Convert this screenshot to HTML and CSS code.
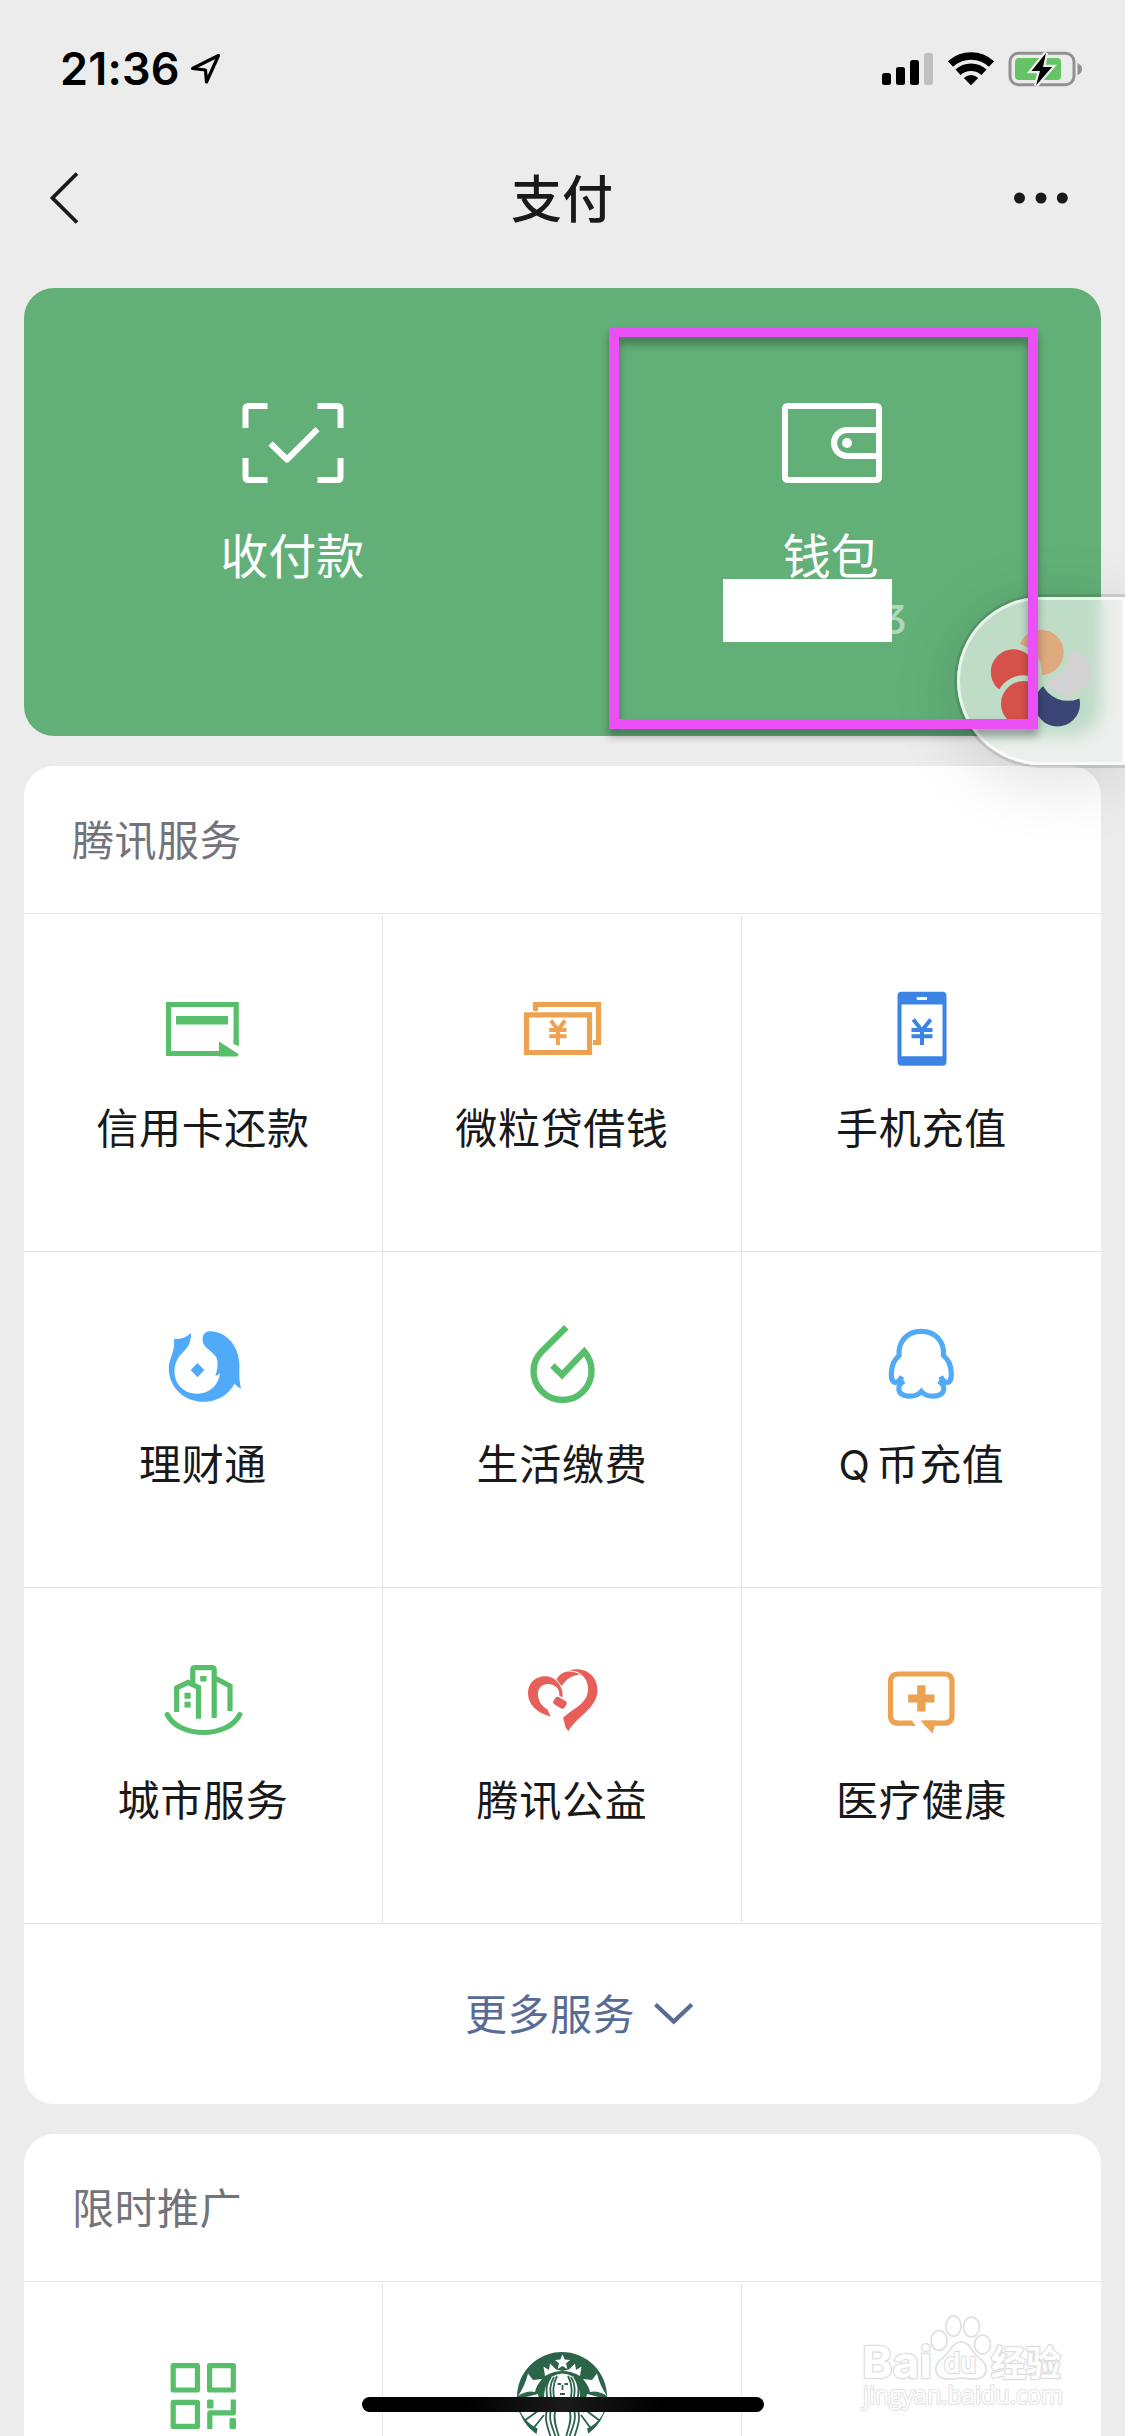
FILE: index.html
```html
<!DOCTYPE html>
<html lang="zh-CN">
<head>
<meta charset="utf-8">
<title>支付</title>
<link rel="stylesheet" href="styles.css">
</head>
<body>
<div class="screen">
  <header class="status">
    <span class="time">21:36</span>
    <svg class="locate" viewBox="188 50 36 36"><path d="M218.500 55.500L192.500 68.500L205.500 70L206.500 82Z" fill="none" stroke="#000" stroke-width="3.200" stroke-linejoin="round"/></svg>
    <svg class="indicators" viewBox="880 48 204 42">
      <g fill="#000"><rect x="882" y="73" width="9" height="12" rx="2.500"/><rect x="896" y="67" width="9" height="18" rx="2.500"/><rect x="910" y="60" width="9" height="25" rx="2.500"/></g>
      <rect x="924" y="53" width="9" height="32" rx="2.500" fill="#bfbfbf"/>
      <g fill="none" stroke="#000" stroke-width="7.500"><path d="M950.500 64.100A30 30 0 0 1 991.500 64.100"/><path d="M958 72.300A19 19 0 0 1 984 72.300"/></g>
      <path d="M963.800 78Q971 72 978.200 78L971 85.300Z"/>
      <rect x="1010" y="53.300" width="64" height="31.500" rx="8.500" fill="none" stroke="#919191" stroke-width="3"/>
      <path d="M1077.500 63Q1082 65 1082 69T1077.500 75Z" fill="#919191"/>
      <rect x="1015" y="58" width="46" height="22" rx="4" fill="#65c466"/>
      <path d="M1046 53L1031.500 71H1040L1036 85.500L1052 67H1043Z" fill="#000" stroke="#ededed" stroke-width="4.500" paint-order="stroke"/>
    </svg>
  </header>
  <nav class="nav">
    <svg class="back" viewBox="44 168 40 60"><path d="M77 173.500L52.500 198L77 222.500" fill="none" stroke="#191919" stroke-width="3.800"/></svg>
    <h1 class="title">支付</h1>
    <svg class="more" viewBox="1012 188 58 20" fill="#191919"><circle cx="1019.500" cy="198" r="5.500"/><circle cx="1041" cy="198" r="5.500"/><circle cx="1062.300" cy="198" r="5.500"/></svg>
  </nav>

  <main class="content">
    <section class="wallet-card">
      <div class="wallet-item">
        <svg class="wallet-icon" viewBox="237.500 398 112 90" fill="none" stroke="#fff" stroke-width="6"><path d="M246 428V409Q246 406 249 406H268M318 406H338Q341 406 341 409V428M341 458V477Q341 480 338 480H318M268 480H249Q246 480 246 477V458"/><path d="M271 443.500L287.500 459.500L318 429.200" stroke-linejoin="round"/></svg>
        <span class="wallet-label">收付款</span>
      </div>
      <div class="wallet-item">
        <svg class="wallet-icon" viewBox="776 398 112 90" fill="none" stroke="#fff" stroke-width="6"><rect x="785" y="406" width="94" height="74" rx="2.500"/><path d="M878 430H847A13 13 0 0 0 847 456H878"/><circle cx="847" cy="443" r="5" fill="#fff" stroke="none"/></svg>
        <span class="wallet-label">钱包</span>
        <span class="balance">3</span>
      </div>
    </section>

    <section class="card">
      <h2 class="card-title">腾讯服务</h2>
      <div class="grid">
        <div class="cell"><svg class="icon green" viewBox="158 984 90 90"><path class="line" d="M236.200 1044.500V1004.500H168.500V1053.500H222"/><path d="M219 1041.500L238.500 1054Q238.500 1056.500 236 1056.500H219Z"/><path d="M233.700 1040H238.700V1046.800L233.700 1043Z"/><rect x="176" y="1016" width="52" height="8.500"/></svg><span class="label">信用卡还款</span></div>
        <div class="cell"><svg class="icon orange" viewBox="517 984 90 90"><path class="line" d="M526.500 1014.800H589.500V1052.500H526.500Z"/><path class="line" d="M535.500 1011V1004.500H598.500V1042.500H593"/><path class="line yen" d="M550.800 1020.500L557.900 1030L565 1020.500M557.900 1029V1045M549.300 1030H566.500M549.300 1036.300H566.500"/></svg><span class="label">微粒贷借钱</span></div>
        <div class="cell"><svg class="icon blue" viewBox="876.500 984 90 90"><path fill-rule="evenodd" d="M901 991.700H942Q946 991.700 946 996V1061.500Q946 1065.700 942 1065.700H901Q897 1065.700 897 1061.500V996Q897 991.700 901 991.700ZM901 1004.500V1056.300H942V1004.500ZM916.300 997V1000H926.500V997Z"/><path class="line yen" d="M912.800 1019.500L921.500 1030.500L930.200 1019.500M921.500 1029V1045M911 1030H932M911 1036.300H932"/></svg><span class="label">手机充值</span></div>

        <div class="cell"><svg class="icon sky" viewBox="158 1320 90 90"><path d="M174 1338.700Q184 1340 191 1332.700C191.500 1345 186 1349 179.500 1356C169 1370 175 1393.700 197.600 1393.700C209 1393.700 219 1385 220 1373Q218.500 1375.500 215.300 1376C217.500 1370 217.800 1366 217.500 1362C217.500 1352 202.600 1350 202.600 1339.300C202.600 1334 206 1331.300 210 1331.300C226 1331.300 239.500 1346 239.500 1366C239 1376 239.500 1382 241 1388.800Q237.500 1387 234.500 1383.700C229 1394 218 1401.800 203.300 1401.800C184 1401.800 168.800 1387 168.800 1368.500C168.800 1358 175.500 1352 174 1338.700Z"/><path d="M197.500 1363L204.300 1370L197.500 1377.200L190.700 1370Z"/></svg><span class="label">理财通</span></div>
        <div class="cell"><svg class="icon green" viewBox="517 1320 90 90"><path class="line drop" d="M566.300 1327.300L541.800 1351.500C536 1357.500 533.500 1364 533.500 1371A29 29 0 0 0 591.500 1371C591.500 1363 589 1357 584.300 1351.500L562 1375L552.500 1365.500"/></svg><span class="label">生活缴费</span></div>
        <div class="cell"><svg class="icon sky" viewBox="876.500 1320 90 90"><path class="line" d="M901.500 1376.500C897 1384.500 890.800 1385 890.800 1374C891 1364 894 1360 898.600 1355.500C897.500 1341 907 1331.300 920.800 1331.300S944 1341 943 1355.500C947.600 1360 950.600 1364 950.800 1374C950.800 1385 944.600 1384.500 940.100 1376.500M903.500 1381C899 1383.500 898 1386 898.300 1389.500C900 1398.500 916 1397.500 920.800 1391.500C925.600 1397.500 941.600 1398.500 943.300 1389.500C943.600 1386 942.600 1383.500 938.100 1381"/></svg><span class="label"><span class="q">Q</span>币充值</span></div>

        <div class="cell"><svg class="icon green" viewBox="158 1656 90 90"><path class="line" d="M176.700 1712V1688L188 1682.500L198.500 1687.500V1718.700M192.800 1684V1670Q192.800 1667.700 195 1667.700H212Q214.200 1667.700 214.200 1670V1718M215 1678L230 1686V1711"/><path class="line" stroke-linecap="round" d="M167.200 1714.500C179 1738.500 228 1738.500 239.800 1714.500"/><path d="M200.300 1676H206.500V1681.500H200.300ZM184.500 1692.700H190.600V1698.700H184.500ZM184.500 1701.700H190.600V1707.500H184.500Z"/></svg><span class="label">城市服务</span></div>
        <div class="cell"><svg class="icon red" viewBox="517 1656 90 90"><path d="M563 1718C573 1708 588 1704 588 1689C588 1683 586 1678 580 1673.500C577 1671 573 1671 569 1670.500C585 1665.500 597.500 1676 597.500 1690C597.500 1708 577 1716 568.500 1731C564 1727 565 1722 563 1718Z"/><path d="M556.500 1679.500C561 1671 570 1669.500 580 1674.300C572 1676 566 1679 561.800 1686Z"/><path d="M550.700 1716.700C537 1712.500 528 1705 528 1693C528 1682.500 536 1676.300 545 1676.300C556 1676.300 564 1687 562.500 1697.500L559.300 1695.500C560 1688 554 1684 548 1684C541 1684 537.500 1689 538 1695C538.500 1702 542 1706 547.500 1709.500Z"/><rect x="553.500" y="1698.500" width="13" height="8.500" rx="3" transform="rotate(30 560 1702.700)"/></svg><span class="label">腾讯公益</span></div>
        <div class="cell"><svg class="icon orange" viewBox="876.500 1656 90 90"><path class="line" d="M912 1723.200H898Q890 1723.200 890 1715.200V1682Q890 1674 898 1674H943.500Q951.500 1674 951.500 1682V1715.200Q951.500 1723.200 943.500 1723.200H924"/><path d="M911 1720.500L915.300 1726H911ZM919.800 1720.500H936L931.900 1733.500ZM916.700 1685.300H925V1694.500H934V1702.500H925V1711.500H916.700V1702.500H907.600V1694.500H916.700Z"/></svg><span class="label">医疗健康</span></div>
      </div>
      <div class="expand"><span>更多服务</span><svg class="expand-icon" viewBox="651 2000 44 30"><path d="M654.500 2005.500L672.700 2022.500L690.800 2005.500" fill="none" stroke="#576b95" stroke-width="4.200"/></svg></div>
    </section>

    <section class="card">
      <h2 class="card-title">限时推广</h2>
      <div class="grid">
        <div class="cell"><svg class="icon green" viewBox="158 2352 90 90"><path class="line" stroke-linejoin="round" d="M173.200 2365.600H197.400V2390H173.200ZM209.600 2365.600H233.300V2390H209.600ZM173.200 2402.300H197.400V2426.400H173.200ZM233.300 2399.500V2412.800H209.800V2429"/><rect x="207" y="2399.500" width="6.500" height="9" rx="1.500"/><rect x="229.500" y="2418" width="6.500" height="11" rx="1.500"/></svg></div>
        <div class="cell"><svg class="icon" viewBox="517 2352 90 90">
          <circle cx="562" cy="2397" r="45" fill="#2b6448"/>
          <g fill="#fff"><path d="M562.500 2354.500L564.700 2359.500L570 2360L566 2363.500L567.300 2369L562.500 2366L557.700 2369L559 2363.500L555 2360L560.300 2359.500Z"/>
          <path d="M545 2376L543.500 2366.500L549 2370L550 2363.500L556 2369.500L562.500 2371L569 2369.500L575 2363.500L576 2370L581.500 2366.500L580 2376Q562.500 2366 545 2376Z"/>
          <path d="M528 2373.500L533 2380L542 2379Q536 2386 535 2392Q527 2390 518 2396Q525 2386 528 2373.500ZM597 2373.500L592 2380L583 2379Q589 2386 590 2392Q598 2390 607 2396Q600 2386 597 2373.500Z"/>
          <path d="M518 2399L538 2394L545 2431Q528 2427 520 2411ZM606 2399L587 2394L580 2431Q598 2426 604 2411Z"/>
          <path d="M551 2377Q562.500 2370 574 2377Q580 2386 580 2398L590 2441H535L544 2398Q544 2386 551 2377Z"/></g>
          <g fill="none" stroke="#2b6448" stroke-width="1.800"><path d="M551 2377C542 2388 550 2400 547 2410S548 2428 552 2441M554 2377C546 2390 554 2400 551 2410S553 2428 557 2441M557 2376C549 2391 557 2402 555 2412S557 2428 560 2441M574 2377C583 2388 575 2400 578 2410S577 2428 573 2441M571 2377C579 2390 571 2400 574 2410S572 2428 568 2441M568 2376C576 2391 568 2402 570 2412S568 2428 565 2441M557.500 2384H561M564.500 2384H568M562.500 2385V2390M560 2394H565M519 2412L540 2402M524 2421L542 2408M532 2430L544 2415M605 2412L585 2402M600 2421L583 2408M592 2430L581 2415"/></g>
        </svg></div>
        <div class="cell"></div>
      </div>
    </section>
  </main>

  <svg class="watermark" viewBox="855 2308 220 112">
    <g class="mark">
      <text x="862" y="2378" class="wm-brand" textLength="70" lengthAdjust="spacingAndGlyphs">Bai</text>
      <ellipse cx="939" cy="2340.500" rx="8" ry="10"/><ellipse cx="953.500" cy="2326" rx="7.500" ry="10.200"/><ellipse cx="971.500" cy="2327" rx="8" ry="10"/><ellipse cx="982.500" cy="2344.500" rx="8" ry="9.500"/>
      <path d="M961 2342C969 2342 971 2350 977 2356C983 2361 989 2366 985 2374C981 2381 972 2379 961 2378C950 2379 942 2381 937 2374C933 2366 939 2361 945 2356C951 2350 953 2342 961 2342Z"/>
      <text x="944" y="2373" class="wm-du" textLength="32" lengthAdjust="spacingAndGlyphs">du</text>
      <text x="991" y="2376" class="wm-cn">经验</text>
      <text x="863" y="2404" class="wm-url" textLength="200" lengthAdjust="spacingAndGlyphs">jingyan.baidu.com</text>
    </g>
  </svg>

  <div class="redaction"></div>
  <div class="float-pill">
    <svg class="petals" viewBox="957 597 168 168">
      <defs>
        <mask id="m1"><rect x="957" y="597" width="168" height="168" fill="#fff"/><circle cx="1013.500" cy="672" r="28.500" fill="#000"/></mask>
        <mask id="m2"><rect x="957" y="597" width="168" height="168" fill="#fff"/><circle cx="1023.700" cy="703.800" r="28.500" fill="#000"/></mask>
        <mask id="m3"><rect x="957" y="597" width="168" height="168" fill="#fff"/><circle cx="1057.400" cy="703.800" r="28.500" fill="#000"/></mask>
        <mask id="m4"><rect x="957" y="597" width="168" height="168" fill="#fff"/><circle cx="1068" cy="672.300" r="28.500" fill="#000"/></mask>
        <mask id="m5"><rect x="957" y="597" width="168" height="168" fill="#fff"/><circle cx="1041" cy="652.500" r="28.500" fill="#000"/></mask>
      </defs>
      <circle cx="1041" cy="652.500" r="22.700" fill="#dfa97f" mask="url(#m1)"/>
      <circle cx="1013.500" cy="672" r="22.700" fill="#d55149" mask="url(#m2)"/>
      <circle cx="1023.700" cy="703.800" r="22.700" fill="#d55149" mask="url(#m3)"/>
      <circle cx="1057.400" cy="703.800" r="22.700" fill="#3b4677" mask="url(#m4)"/>
      <circle cx="1068" cy="672.300" r="22.700" fill="#d2d2d2" mask="url(#m5)"/>
    </svg>
  </div>
  <div class="highlight"></div>
  <div class="home-bar"></div>
</div>
</body>
</html>
```

FILE: styles.css
```css
* { box-sizing: border-box; }

body {
  margin: 0;
  background: #ececec;
  font-family: "Noto Sans CJK SC", sans-serif;
  color: #191919;
}

.screen {
  position: relative;
  width: 1125px;
  height: 2436px;
  overflow: hidden;
  background: #ececec;
}

svg { display: block; flex: none; }

/* status bar */
.status {
  display: flex;
  align-items: flex-start;
  height: 132px;
  padding: 48px 41px 0 60px;
}
.time {
  width: 128px;
  font: 600 45px/42px Inter, sans-serif;
  letter-spacing: 0.2px;
  color: #000;
}
.locate { width: 36px; height: 36px; margin-top: 2px; }
.indicators { width: 204px; height: 42px; margin-left: auto; }

/* navigation bar */
.nav {
  display: flex;
  align-items: center;
  justify-content: space-between;
  height: 132px;
  padding: 0 55px 0 44px;
}
.back { width: 40px; height: 60px; margin-right: 28px; }
.title {
  margin: 0 0 5px;
  font-size: 51px;
  line-height: 70px;
  font-weight: 500;
}
.more { width: 58px; height: 20px; }

.content {
  display: flex;
  flex-direction: column;
  gap: 30px;
  padding: 24px 24px 0;
}

/* green card */
.wallet-card {
  display: grid;
  grid-template-columns: 1fr 1fr;
  height: 448px;
  border-radius: 30px;
  background: #62b078;
}
.wallet-item {
  display: flex;
  flex-direction: column;
  align-items: center;
  padding-top: 110px;
  color: #fff;
}
.wallet-icon { width: 112px; height: 90px; }
.wallet-label {
  margin: 33px 2px 0 0;
  font-size: 48px;
  line-height: 64px;
}
.balance {
  margin: 10px 0 0 125px;
  font: 500 39px/50px Inter, sans-serif;
  font-feature-settings: "cv09";
  color: rgba(255, 255, 255, 0.5);
}

/* service cards */
.card {
  border-radius: 30px;
  background: #fff;
}
.card-title {
  height: 148px;
  margin: 0;
  padding-left: 48px;
  border-bottom: 1px solid #e4e4e4;
  font-size: 42px;
  line-height: 144px;
  letter-spacing: 0.5px;
  font-weight: 400;
  color: #73737a;
}
.grid {
  display: grid;
  grid-template-columns: repeat(3, 1fr);
  grid-auto-rows: 336px;
  padding-top: 2px;
}
.cell {
  display: flex;
  flex-direction: column;
  align-items: center;
  padding-top: 68px;
  border-right: 1px solid #e4e4e4;
  border-bottom: 1px solid #e4e4e4;
}
.cell:nth-child(3n) { border-right: 0; }
.icon { width: 90px; height: 90px; fill: currentColor; }
.icon .line { fill: none; stroke: currentColor; stroke-width: 5.2; }
.icon .yen { stroke-width: 4; }
.icon .drop { stroke-width: 6.4; }
.green { color: #57be6a; }
.orange { color: #eca250; }
.blue { color: #3c83e6; }
.sky { color: #50aaf8; }
.red { color: #e85e58; }
.label {
  margin-top: 22px;
  font-size: 42px;
  line-height: 60px;
  letter-spacing: 0.7px;
}
.q { margin-right: 6px; font-family: Inter, sans-serif; font-size: 41px; }

.expand {
  display: flex;
  align-items: center;
  justify-content: center;
  gap: 17px;
  height: 180px;
  padding: 0 0 4px 36px;
  font-size: 42px;
  line-height: 60px;
  letter-spacing: 0.5px;
  color: #576b95;
}
.expand-icon { width: 44px; height: 30px; margin-top: 4px; }

/* layers over the page */
.redaction {
  position: absolute;
  left: 723px;
  top: 579px;
  width: 169px;
  height: 63px;
  background: #fff;
}
.float-pill {
  position: absolute;
  left: 957px;
  top: 597px;
  width: 168px;
  height: 168px;
  border-radius: 84px 0 0 84px;
  background: rgba(236, 240, 238, 0.68);
  backdrop-filter: blur(8px);
  box-shadow:
    inset 0 0 0 3px rgba(255, 255, 255, 0.65),
    0 0 0 3px rgba(0, 0, 0, 0.12),
    0 12px 70px rgba(0, 0, 0, 0.14);
}
.petals { width: 168px; height: 168px; }
.highlight {
  position: absolute;
  left: 609px;
  top: 327px;
  width: 429px;
  height: 402px;
  border: 10px solid #ea50f6;
  filter: drop-shadow(0 7px 4px rgba(0, 0, 0, 0.32));
}
.watermark {
  position: absolute;
  left: 855px;
  top: 2308px;
  width: 220px;
  height: 112px;
}
.mark {
  fill: #fff;
  stroke: #dedede;
  stroke-width: 1.6;
}
.mark text { paint-order: stroke; stroke-width: 2.6; stroke-linejoin: round; }
.wm-brand { font: 700 44px Inter, sans-serif; }
.wm-du { font: 600 29px Inter, sans-serif; }
.wm-cn { font: 700 35px "Noto Sans CJK SC", sans-serif; }
.mark .wm-url { font: 400 25px "Open Sans", sans-serif; stroke: #e2e2e2; stroke-width: 2.2; }
.home-bar {
  position: absolute;
  left: 362px;
  top: 2397px;
  width: 402px;
  height: 15px;
  border-radius: 8px;
  background: linear-gradient(90deg, #000 25%, #1a1a1a 50%, #000 75%);
}
```
